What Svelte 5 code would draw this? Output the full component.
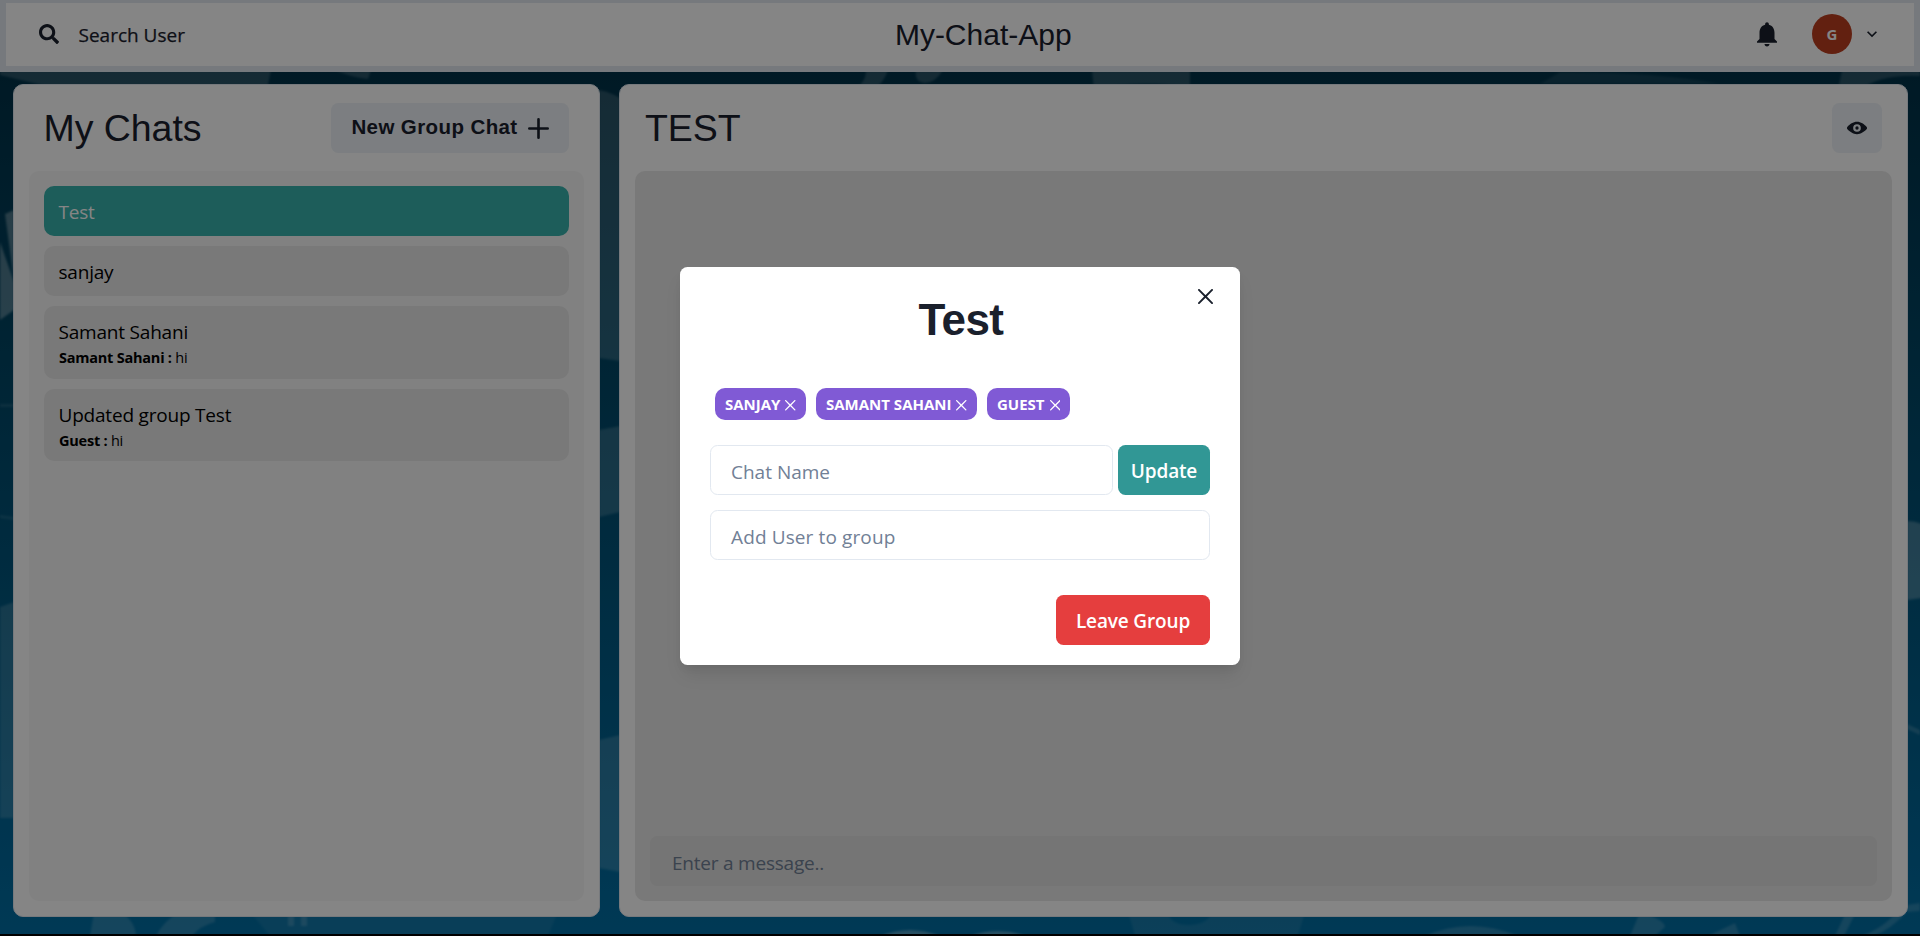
<script>
  const chats = [
    { name: 'Test', selected: true },
    { name: 'sanjay' },
    { name: 'Samant Sahani', sender: 'Samant Sahani', message: 'hi' },
    { name: 'Updated group Test', sender: 'Guest', message: 'hi' }
  ];
  const members = ['sanjay', 'Samant Sahani', 'Guest'];
  const crossPath =
    'M.439,21.44a1.5,1.5,0,0,0,2.122,2.121L11.823,14.3a.25.25,0,0,1,.354,0l9.262,9.263a1.5,1.5,0,1,0,2.122-2.121L14.3,12.177a.25.25,0,0,1,0-.354l9.263-9.262A1.5,1.5,0,0,0,21.439.44L12.177,9.7a.25.25,0,0,1-.354,0L2.561.44A1.5,1.5,0,0,0,.439,2.561L9.7,11.823a.25.25,0,0,1,0,.354Z';
</script>

<div class="app">
  <svg class="backdrop" viewBox="0 0 1920 936" preserveAspectRatio="none" aria-hidden="true">
    <defs>
      <linearGradient id="sea" x1="0" y1="0" x2="0" y2="1">
        <stop offset="0" stop-color="#002c40" />
        <stop offset="0.45" stop-color="#004a6b" />
        <stop offset="1" stop-color="#006ea4" />
      </linearGradient>
      <filter id="soft"><feGaussianBlur stdDeviation="0.8" /></filter>
    </defs>
    <rect width="1920" height="936" fill="url(#sea)" />
    <g fill="#fff" fill-opacity="0.16" filter="url(#soft)">
      <path d="M0 70H271L267 90H60Q30 82 0 75Z" />
      <path d="M335 70H371L368 79Q350 77 335 70Z" />
      <path d="M866 70H888Q884 82 874 90H852Q866 84 866 70Z" />
      <path d="M916 70H943Q935 83 925 83Q914 82 916 70Z" />
      <path d="M1092 70H1190V88Q1140 79 1094 90Z" />
      <path d="M1560 72Q1660 72 1720 84H1540Z" fill-opacity="0.08" />
      <path d="M1842 70H1920V76Q1880 74 1860 90H1838Z" />
      <path d="M5 214L14 210V280ZM0 242L14 282V310L0 320Z" fill-opacity="0.3" />
      <path d="M0 404H14V407H0ZM0 515L14 517V520L0 518Z" fill-opacity="0.1" />
      <path d="M0 607L14 602V818H0Z" />
      <path d="M599 90Q610 92 620 98V361L599 358Z" />
      <path d="M599 430L620 426V512L599 517Z" />
      <path d="M599 740L620 735V872L599 868Z" />
      <path d="M1907 521Q1915 521 1922 524V598L1907 600Z" fill-opacity="0.25" />
      <path d="M1907 724L1920 730V735L1907 729ZM1907 905L1920 903V911L1907 912Z" />
      <path d="M94 912H120Q135 920 136 936H90Z" />
      <path d="M180 912H215V922Q200 926 192 936H156Q164 920 180 912Z" />
      <path d="M250 912H558L548 936H270Z" fill-opacity="0.07" />
      <path d="M288 912H294V926H288ZM301 912H307V926H301Z" />
      <path d="M880 936Q910 924 940 936ZM970 936Q998 926 1026 936Z" fill-opacity="0.3" />
      <path fill-rule="evenodd" d="M1128 912H1305L1298 936H1135ZM1168 912Q1170 925 1190 925Q1208 924 1212 912Z" fill-opacity="0.09" />
      <path d="M1425 936Q1470 916 1518 936ZM1640 912Q1665 920 1665 927L1655 936H1630ZM1708 936L1735 923L1740 936Z" />
      <path d="M1846 912H1856L1844 936H1835ZM1896 912H1907Q1890 930 1874 936H1862Q1886 926 1896 912Z" />
    </g>
    <rect y="934" width="1920" height="2" fill="#000" />
  </svg>

  <header class="topbar">
    <button class="search">
      <svg width="20" height="20" viewBox="0 0 512 512"><path fill="currentColor" d="M505 442.7L405.3 343c-4.5-4.5-10.6-7-17-7H372c27.6-35.3 44-79.7 44-128C416 93.1 322.9 0 208 0S0 93.1 0 208s93.1 208 208 208c48.3 0 92.7-16.4 128-44v16.3c0 6.4 2.5 12.5 7 17l99.7 99.7c9.4 9.4 24.6 9.4 33.9 0l28.3-28.3c9.4-9.4 9.4-24.6.1-34zM208 336c-70.7 0-128-57.2-128-128 0-70.7 57.2-128 128-128 70.7 0 128 57.2 128 128 0 70.7-57.2 128-128 128z" /></svg>
      <span>Search User</span>
    </button>
    <h1>My-Chat-App</h1>
    <div class="account">
      <svg class="bell" width="30" height="30" viewBox="0 0 24 24"><path fill="currentColor" d="M12 22c1.1 0 2-.9 2-2h-4c0 1.1.89 2 2 2zm6-6v-5c0-3.07-1.64-5.64-4.5-6.32V4c0-.83-.67-1.5-1.5-1.5s-1.5.67-1.5 1.5v.68C7.63 5.36 6 7.92 6 11v5l-2 2v1h16v-1l-2-2z" /></svg>
      <span class="avatar">G</span>
      <svg class="chevron" width="20" height="20" viewBox="0 0 24 24"><path fill="currentColor" d="M16.59 8.59L12 13.17 7.41 8.59 6 10l6 6 6-6z" /></svg>
    </div>
  </header>

  <main>
    <section class="card chats">
      <div class="head">
        <h2>My Chats</h2>
        <button class="gray newgroup">
          <span>New Group Chat</span>
          <svg width="21" height="21" viewBox="0 0 24 24"><path fill="currentColor" d="M0,12a1.5,1.5,0,0,0,1.5,1.5h8.75a.25.25,0,0,1,.25.25V22.5a1.5,1.5,0,0,0,3,0V13.75a.25.25,0,0,1,.25-.25H22.5a1.5,1.5,0,0,0,0-3H13.75a.25.25,0,0,1-.25-.25V1.5a1.5,1.5,0,0,0-3,0v8.75a.25.25,0,0,1-.25.25H1.5A1.5,1.5,0,0,0,0,12Z" /></svg>
        </button>
      </div>
      <div class="list">
        {#each chats as chat}
          <div class="chat" class:selected={chat.selected}>
            <div class="name">{chat.name}</div>
            {#if chat.sender}
              <div class="last"><b>{chat.sender} :</b> {chat.message}</div>
            {/if}
          </div>
        {/each}
      </div>
    </section>

    <section class="card room">
      <div class="head">
        <h2>TEST</h2>
        <button class="gray eye" aria-label="View group">
          <svg width="20" height="20" viewBox="0 0 24 24" fill="currentColor"><path d="M23.432,10.524C20.787,7.614,16.4,4.538,12,4.6,7.6,4.537,3.213,7.615.568,10.524a2.211,2.211,0,0,0,0,2.948C3.182,16.351,7.507,19.4,11.839,19.4h.308c4.347,0,8.671-3.049,11.288-5.929A2.21,2.21,0,0,0,23.432,10.524ZM7.4,12A4.6,4.6,0,1,1,12,16.6,4.6,4.6,0,0,1,7.4,12Z" /><circle cx="12" cy="12" r="2" /></svg>
        </button>
      </div>
      <div class="messages">
        <div class="compose">Enter a message..</div>
      </div>
    </section>
  </main>

  <div class="overlay">
    <div class="modal" role="dialog">
      <button class="close" aria-label="Close">
        <svg width="15" height="15" viewBox="0 0 24 24"><path fill="currentColor" d={crossPath} /></svg>
      </button>
      <h3>Test</h3>
      <div class="tags">
        {#each members as member}
          <span class="tag">
            <span>{member}</span>
            <svg width="10.5" height="10.5" viewBox="0 0 24 24"><path fill="currentColor" d={crossPath} /></svg>
          </span>
        {/each}
      </div>
      <div class="rename">
        <div class="field">Chat Name</div>
        <button class="update">Update</button>
      </div>
      <div class="field add">Add User to group</div>
      <button class="leave">Leave Group</button>
    </div>
  </div>
</div>

<style>
  :global(body) { margin: 0; overflow: hidden; }
  .app, .app * { box-sizing: border-box; }
  .app {
    position: relative;
    display: flex;
    flex-direction: column;
    width: 1920px;
    height: 936px;
    font-family: 'Open Sans', 'Noto Sans', sans-serif;
    font-size: 19px;
    color: #1a202c;
    overflow: hidden;
  }
  .backdrop { position: absolute; inset: 0; width: 100%; height: 100%; z-index: -1; }
  .app svg { flex: none; display: block; }
  button { border: 0; background: none; padding: 0; margin: 0; font: inherit; color: inherit; display: flex; align-items: center; }
  h1, h2, h3 { margin: 0; font-family: 'Liberation Sans', Arial, sans-serif; font-weight: 400; white-space: nowrap; }

  .topbar {
    height: 72px;
    flex: none;
    display: grid;
    grid-template-columns: 1fr auto 1fr;
    align-items: center;
    background: #fff;
    border: 6px solid #e2e8f0;
    border-top-width: 3px;
    padding: 0 32px 0 32.5px;
  }
  .search { gap: 20px; -webkit-text-stroke: 0.25px currentColor; }
  .search svg { margin-top: -2px; }
  h1 { font-size: 30px; line-height: 40px; transform: translateX(23px); }
  .account { display: flex; align-items: center; justify-content: flex-end; }
  .bell { margin-right: 30px; margin-top: -1px; }
  .avatar {
    width: 40px; height: 40px; border-radius: 50%;
    background: #bc3e1f; color: #fff;
    display: grid; place-items: center;
    font-size: 15px; font-weight: 700;
    margin-right: 10px; margin-top: -1px;
  }
  .chevron { margin-top: -2px; }

  main { flex: 1; display: flex; gap: 19px; padding: 12px 12px 19px 13px; }
  .card { background: #fff; border: 1px solid #e2e8f0; border-radius: 10px; display: flex; flex-direction: column; padding: 18px 15px 15px; }
  .chats { width: 587px; flex: none; }
  .room { flex: 1; }
  .head { height: 50px; flex: none; display: flex; align-items: center; justify-content: space-between; margin-bottom: 18px; }
  .chats .head { padding: 0 15px 0 14.5px; }
  .room .head { padding: 0 10px; }
  h2 { font-size: 37.5px; line-height: 50px; letter-spacing: -0.05px; }
  .gray { height: 50px; background: #edf2f7; border-radius: 7.5px; justify-content: center; }
  .newgroup { width: 238px; gap: 10px; font-family: 'Liberation Sans', Arial, sans-serif; font-weight: 700; font-size: 20.5px; letter-spacing: 0.4px; }
  .newgroup span { margin-top: -2px; }
  .eye { width: 50px; }

  .list { flex: 1; background: #f8f8f8; border-radius: 10px; padding: 15px; display: flex; flex-direction: column; gap: 10px; }
  .chat { background: #e8e8e8; color: #000; border-radius: 10px; padding: 11px 15px 9px; }
  .chat.selected { background: #38b2ac; color: #fff; }
  .name { line-height: 30px; letter-spacing: -0.2px; margin-left: -0.5px; }
  .last { font-size: 14.5px; line-height: 22.5px; letter-spacing: -0.23px; font-weight: 400; }
  .last b { font-weight: 700; }

  .messages { flex: 1; background: #e8e8e8; border-radius: 10px; padding: 15px; display: flex; flex-direction: column; justify-content: flex-end; }
  .compose { height: 50px; line-height: 54px; background: #e0e0e0; border-radius: 7.5px; padding-left: 22px; color: #718096; letter-spacing: -0.22px; }

  .overlay { position: absolute; inset: 0; background: rgba(0, 0, 0, 0.48); display: flex; justify-content: center; align-items: flex-start; padding-top: 267px; }
  .modal {
    position: relative;
    width: 560px; height: 398px;
    background: #fff;
    border-radius: 7.5px;
    padding: 20px 30px;
    display: flex; flex-direction: column;
    box-shadow: 0 12px 19px -4px rgba(0, 0, 0, 0.1), 0 5px 8px -2px rgba(0, 0, 0, 0.05);
  }
  .close { position: absolute; top: 22px; right: 27px; }
  h3 { font-size: 44px; line-height: 65px; font-weight: 700; text-align: center; padding-left: 2px; letter-spacing: -0.6px; }
  .tags { display: flex; gap: 10px; padding: 0 5px; margin-top: 36px; margin-bottom: 25px; }
  .tag { height: 32px; border-radius: 10px; background: #805ad5; color: #fff; display: flex; align-items: center; gap: 5px; padding: 0 10px; font-size: 15px; font-weight: 700; text-transform: uppercase; letter-spacing: 0; }
  .tag svg { margin-top: 3px; }
  .rename { display: flex; gap: 5px; margin-bottom: 15px; }
  .field { height: 50px; line-height: 52px; border: 1px solid #e2e8f0; border-radius: 7.5px; padding-left: 20px; color: #718096; }
  .rename .field { flex: 1; }
  .add { letter-spacing: 0.12px; }
  .update, .leave { height: 50px; border-radius: 7.5px; color: #fff; font-weight: 600; justify-content: center; letter-spacing: -0.15px; padding-top: 2px; }
  .update { width: 92px; background: #319795; }
  .leave { width: 154px; background: #e53e3e; align-self: flex-end; margin-top: 35px; }
</style>
